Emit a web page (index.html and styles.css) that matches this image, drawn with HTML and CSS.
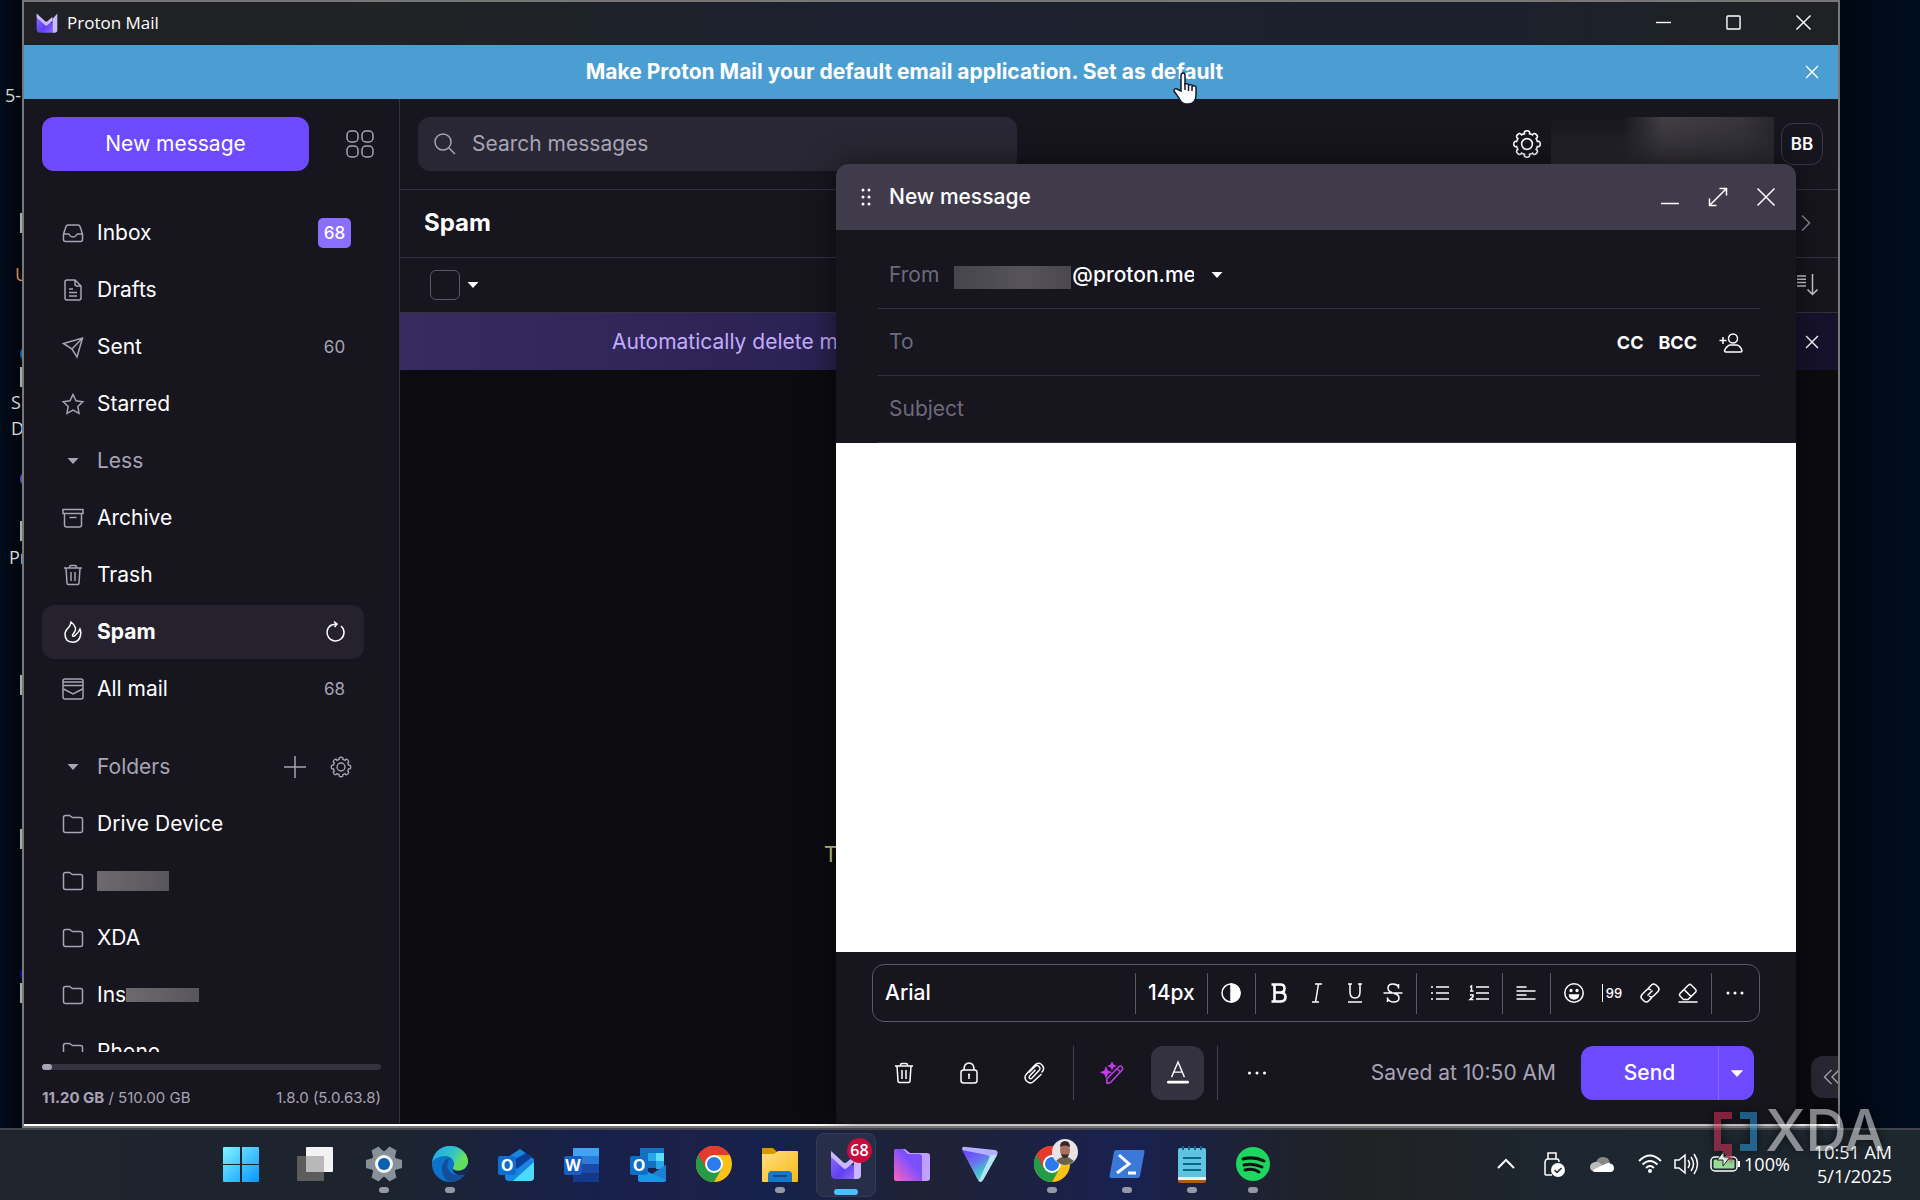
FILE: index.html
```html
<!DOCTYPE html>
<html lang="en">
<head>
<meta charset="utf-8">
<title>Proton Mail</title>
<link rel="stylesheet" href="styles.css">
</head>
<body>
<svg class="defs" aria-hidden="true">
  <symbol id="gear" viewBox="-12 -12 24 24"><path d="M8.3-2Q10.6-2.6 10.6 0T8.3 2Q7.8 3.4 7.3 4.4Q9.4 5.6 7.5 7.5T4.4 7.3Q3.2 7.9 2 8.3Q2.6 10.6 0 10.6T-2 8.3Q-3.4 7.8-4.4 7.3Q-5.6 9.4-7.5 7.5T-7.3 4.4Q-7.9 3.2-8.3 2Q-10.6 2.6-10.6 0T-8.3-2Q-7.8-3.4-7.3-4.4Q-9.4-5.6-7.5-7.5T-4.4-7.3Q-3.2-7.9-2-8.3Q-2.6-10.6 0-10.6T2-8.3Q3.4-7.8 4.4-7.3Q5.6-9.4 7.5-7.5T7.3-4.4Q7.9-3.2 8.3-2Z"/><circle r="4.3"/></symbol>
  <symbol id="trash" viewBox="0 0 22 22"><path d="M2 4h18M4 4l1 15q0 1.5 1.500 1.500h9q1.500 0 1.500-1.500l1-15M7.500 4V3q0-1.500 1.500-1.500h4q1.500 0 1.500 1.500v1M9 8v9M13 8v9"/></symbol>
  <symbol id="folder" viewBox="0 0 22 22"><path d="M1.500 4.500q0-2 2-2h4l3 2h8q2 0 2 2v11q0 2-2 2h-15q-2 0-2-2z"/></symbol>
  <symbol id="caret" viewBox="0 0 12 8"><path d="M.5 1h11L6 7z" fill="currentColor" stroke="none"/></symbol>
  <symbol id="cross" viewBox="0 0 20 20"><path d="M1.500 1.500l17 17M18.500 1.500l-17 17"/></symbol>
  <linearGradient id="pm" x1="0" y1="0" x2="1" y2="1"><stop offset="0" stop-color="#8f70ff"/><stop offset=".6" stop-color="#6040f0"/><stop offset="1" stop-color="#8c68ff"/></linearGradient>
  <linearGradient id="pf" x1="1" y1="0" x2="0" y2="1"><stop offset=".4" stop-color="#7a50ff"/><stop offset="1" stop-color="#ff62c0"/></linearGradient>
  <linearGradient id="pv" x1="0" y1="0" x2=".6" y2="1"><stop offset="0" stop-color="#6a3cff"/><stop offset=".5" stop-color="#6a70f0"/><stop offset="1" stop-color="#30e8c0"/></linearGradient>
  <linearGradient id="win" x1="0" y1="0" x2="1" y2="1"><stop offset="0" stop-color="#80f4ff"/><stop offset="1" stop-color="#0c94ff"/></linearGradient>
  <linearGradient id="edge" x1="0" y1="0" x2="1" y2=".4"><stop offset="0" stop-color="#20a8e8"/><stop offset=".6" stop-color="#32c4c8"/><stop offset="1" stop-color="#72e848"/></linearGradient>
  <linearGradient id="fold" x1="0" y1="0" x2="1" y2="1"><stop offset="0" stop-color="#ffe080"/><stop offset="1" stop-color="#f8b818"/></linearGradient>
  <symbol id="proton" viewBox="0 0 32 32"><path d="M1 3l14 13h9v14H6q-5 0-5-5z" fill="url(#pm)"/><path d="M24 10l7-8v24q0 4-4 4h-3z" fill="#c9b8ff"/><path d="M1 2l12 11q2 2 4 0l7-6v6l-7 6q-2 2-4 0L1 8z" fill="#c9b8ff"/></symbol>
  <symbol id="chrome" viewBox="-18 -18 36 36"><circle r="18" fill="#fbc116"/><path d="M0 0L-15.600-9A18 18 0 0 1 15.600-9L0-9z" fill="#e33b2e"/><path d="M0 0L-15.600-9A18 18 0 0 0 0 18L8 4z" fill="#259a47"/><path d="M-15.600-9A18 18 0 0 1 15.600-9H0L-8 4z" fill="#e33b2e"/><circle r="9" fill="#fff"/><circle r="7" fill="#2c7bea"/></symbol>
</svg>

<main class="desktop">
  <span class="label label-time">5-</span>
  <span class="chip chip-1"></span><span class="label label-u">U</span>
  <span class="orb orb-blue"></span><span class="chip chip-2"></span>
  <span class="label label-s">S</span><span class="label label-d">D</span>
  <span class="orb orb-violet"></span><span class="chip chip-3"></span>
  <span class="label label-p">Pr</span><span class="chip chip-4"></span><span class="chip chip-5"></span>
  <span class="orb orb-deep"></span><span class="chip chip-6"></span>

  <section class="window">
    <header class="titlebar">
      <svg class="logo"><use href="#proton"/></svg>
      <h1>Proton Mail</h1>
      <div class="win-buttons">
        <button aria-label="Minimize"><svg viewBox="0 0 16 16"><path d="M0 8h16"/></svg></button>
        <button aria-label="Maximize"><svg viewBox="0 0 16 16"><rect x="1" y="1" width="14" height="14" rx="1"/></svg></button>
        <button aria-label="Close"><svg viewBox="0 0 16 16"><path d="M.5.5l15 15M15.500.5l-15 15"/></svg></button>
      </div>
    </header>
    <div class="notice">
      <p>Make Proton Mail your default email application. <a href="#default">Set as default</a></p>
      <button class="notice-close" aria-label="Dismiss"><svg class="i12"><use href="#cross"/></svg></button>
      <svg class="cursor" viewBox="0 0 22 34"><path d="M8 19V4Q8 1 10 1t2 3v8q3-1 4 1 3-1 4 1 3-1 3 2v7q0 8-7 9h-4q-4-1-6-6L1 19q0-3 3-2z" fill="#fff" stroke="#16182c" stroke-width="1.500"/><path d="M12 11v7M15.500 13v6M19 14v5" stroke="#16182c" stroke-width="1.500"/></svg>
    </div>

    <div class="app">
      <aside class="sidebar">
        <div class="side-top">
          <button class="primary compose">New message</button>
          <button class="apps" aria-label="Apps"><svg viewBox="0 0 28 28"><rect x="1" y="1" width="11" height="11" rx="4"/><rect x="16" y="1" width="11" height="11" rx="4"/><rect x="1" y="16" width="11" height="11" rx="4"/><rect x="16" y="16" width="11" height="11" rx="4"/></svg></button>
        </div>
        <nav class="nav">
          <a href="#inbox"><svg viewBox="0 0 22 22"><path d="M1.500 12L4 4.500Q4.500 3 6 3h10q1.500 0 2 1.500L20.500 12v5.500q0 2-2 2h-15q-2 0-2-2zM1.500 12H6q1 0 1.500 1 1 2 3.500 2t3.500-2q.5-1 1.500-1h4.500"/></svg>Inbox<b class="count badge">68</b></a>
          <a href="#drafts"><svg viewBox="0 0 22 22"><path d="M3 3q0-2 2-2h8l6 6v12q0 2-2 2H5q-2 0-2-2zM13 1v4q0 2 2 2h4M7 10h4M7 13.500h8M7 17h8"/></svg>Drafts</a>
          <a href="#sent"><svg viewBox="0 0 22 22"><path d="M1.500 7.500L20.500 2l-5.500 19-5-8zM20.500 2L10 13"/></svg>Sent<span class="count">60</span></a>
          <a href="#starred"><svg viewBox="0 0 22 22"><path d="M11 1.500l3 6.300 6.800.9-5 4.800 1.200 6.800-6-3.300-6 3.300 1.200-6.800-5-4.800 6.800-.9z"/></svg>Starred</a>
          <button class="toggle"><svg class="caret"><use href="#caret"/></svg>Less</button>
          <a href="#archive"><svg viewBox="0 0 22 22"><path d="M1 2.500h20v4H1zM2.500 6.500V18q0 2 2 2h13q2 0 2-2V6.500M7.500 10.500h7"/></svg>Archive</a>
          <a href="#trashed"><svg><use href="#trash"/></svg>Trash</a>
          <a href="#spam" class="current"><svg viewBox="0 0 22 22"><path d="M9 1q3 2 4.500 6 .5 2-1 4l-2 3q0 2 2 1l2-2q2-1.500 3.500-5 1.500 3 .5 6.500Q17 21 11 21.300 3 21 3 13q0-3 4-7 1.500-2 2-5z"/></svg>Spam<svg class="end" viewBox="0 0 22 22"><path d="M16 5a8.500 8.500 0 1 1-9.500-1L11 3M9 .5L12 3 9.500 6"/></svg></a>
          <a href="#all"><svg viewBox="0 0 22 22"><rect x="1" y="1" width="20" height="20" rx="2"/><path d="M1 4h20M1 7.500h20M1.500 11l9.500 5 9.500-5"/></svg>All mail<span class="count">68</span></a>
          <div class="folders-head">
            <button class="toggle"><svg class="caret"><use href="#caret"/></svg>Folders</button>
            <button class="mini" aria-label="Create folder"><svg viewBox="0 0 22 22"><path d="M11 0v22M0 11h22"/></svg></button>
            <button class="mini" aria-label="Manage folders"><svg><use href="#gear"/></svg></button>
          </div>
          <a href="#f1"><svg><use href="#folder"/></svg>Drive Device</a>
          <a href="#f2"><svg><use href="#folder"/></svg><span class="mask mask-a"></span></a>
          <a href="#f3"><svg><use href="#folder"/></svg>XDA</a>
          <a href="#f4"><svg><use href="#folder"/></svg><span class="partial">Ins<span class="mask mask-b"></span></span></a>
          <a href="#f5"><svg><use href="#folder"/></svg>Phone</a>
        </nav>
        <footer class="storage">
          <div class="meter"><span style="width:3%"></span></div>
          <p><span><b>11.20 GB</b> / 510.00 GB</span><span>1.8.0 (5.0.63.8)</span></p>
        </footer>
      </aside>

      <section class="content">
        <div class="topbar">
          <label class="search"><svg viewBox="0 0 22 22"><circle cx="9" cy="9" r="8"/><path d="M15 15l6 6"/></svg><input type="search" placeholder="Search messages" aria-label="Search messages"></label>
          <button class="settings" aria-label="Settings"><svg><use href="#gear"/></svg></button>
          <span class="mask-user"></span>
          <button class="avatar">BB</button>
        </div>
        <div class="heading"><h2>Spam</h2><button aria-label="Next"><svg viewBox="0 0 10 16"><path d="M1 .5L8.500 8 1 15.500"/></svg></button></div>
        <div class="tools"><input type="checkbox" aria-label="Select all"><svg class="caret"><use href="#caret"/></svg><button aria-label="Sort"><svg viewBox="0 0 22 22"><path d="M1 2h9M1 5.300h9M1 8.600h9M1 12h9M16.500 0v20M11.500 15.500l5 5 5-5"/></svg></button></div>
        <div class="auto"><p>Automatically delete messages</p><button aria-label="Dismiss"><svg class="i12"><use href="#cross"/></svg></button></div>
        <div class="empty"><p>There are no messages</p><button class="collapse" aria-label="Show side panel"><svg viewBox="0 0 18 18"><path d="M8.500 1l-8 8 8 8M17 1L9 9l8 8"/></svg></button></div>
      </section>

      <form class="composer">
        <header>
          <svg class="grip" viewBox="0 0 12 18"><g fill="#fff" stroke="none"><circle cx="3" cy="2" r="1.500"/><circle cx="9" cy="2" r="1.500"/><circle cx="3" cy="9" r="1.500"/><circle cx="9" cy="9" r="1.500"/><circle cx="3" cy="16" r="1.500"/><circle cx="9" cy="16" r="1.500"/></g></svg>
          <h2>New message</h2>
          <button type="button" aria-label="Minimize"><svg viewBox="0 0 20 20"><path d="M1 16.500h18"/></svg></button>
          <button type="button" aria-label="Expand"><svg viewBox="0 0 20 20"><path d="M1.500 18.500l17-17M11.500 1.500h7v7M1.500 11.500v7h7"/></svg></button>
          <button type="button" aria-label="Close"><svg><use href="#cross"/></svg></button>
        </header>
        <div class="fields">
          <div class="field"><label for="from">From</label><span class="mask mask-c"></span><select id="from"><option>@proton.me</option></select><svg class="caret"><use href="#caret"/></svg></div>
          <div class="field"><input placeholder="To" aria-label="To"><button type="button">CC</button><button type="button">BCC</button><button type="button" aria-label="Add contacts"><svg viewBox="0 0 24 20"><circle cx="14" cy="5.500" r="4.500"/><path d="M9 13q1-1 2-1h6q4 0 6 5.500 0 1.500-1.500 1.500H7q-1.500 0-1.500-1.500Q6.500 14.500 9 13zM4 4v7M.5 7.500h7"/></svg></button></div>
          <div class="field"><input placeholder="Subject" aria-label="Subject"></div>
        </div>
        <textarea aria-label="Message body"></textarea>
        <div class="format">
          <select class="font" aria-label="Font"><option>Arial</option></select>
          <select class="size" aria-label="Font size"><option>14px</option></select>
          <div class="g1"><button type="button" aria-label="Colour"><svg viewBox="0 0 20 20"><circle cx="10" cy="10" r="9"/><path d="M10 1a9 9 0 0 1 0 18z" fill="#fff"/></svg></button></div>
          <div class="g2">
            <button type="button" aria-label="Bold"><svg viewBox="0 0 20 20"><path d="M2.500 1.500h9q4 0 4 4t-4 4h-6M11 9.500q5.500 0 5.500 4.500t-5.500 4.500H2.500M5.500 1.500v17" stroke-width="2.600"/></svg></button>
            <button type="button" aria-label="Italic"><svg viewBox="0 0 20 20"><path d="M8 1h7M5 19h7M11.500 1l-3 18"/></svg></button>
            <button type="button" aria-label="Underline"><svg viewBox="0 0 20 20"><path d="M3 1h4M13 1h4M5 1v8q0 6 5 6t5-6V1M3 19h14"/></svg></button>
            <button type="button" aria-label="Strikethrough"><svg viewBox="0 0 20 20"><path d="M15.500 5.500V1M15.500 4Q14 1 10 1 5 1 5 5q0 3.500 4 4.500M11 10.500q5 1 5 4.500 0 4-5.500 4-4 0-6-3.500M4.500 19v-4.500M.5 10h19"/></svg></button>
          </div>
          <div class="g3">
            <button type="button" aria-label="Bullets"><svg viewBox="0 0 20 20"><path d="M6 4h13M6 10h13M6 16h13M1 4h2M1 10h2M1 16h2"/></svg></button>
            <button type="button" aria-label="Numbering"><svg viewBox="0 0 20 20"><path d="M7 4h13M7 10h13M7 16h13M1 4l1.500-1v5M1 8h3.500M1 12h3v1.500l-3 3h3.500"/></svg></button>
          </div>
          <div class="g4"><button type="button" aria-label="Align"><svg viewBox="0 0 20 20"><path d="M.5 4h10M.5 8h19M.5 12h10M.5 16h19"/></svg></button></div>
          <div class="g5">
            <button type="button" aria-label="Emoji"><svg viewBox="0 0 20 20"><circle cx="10" cy="10" r="9.200"/><circle cx="7" cy="7.500" r=".9" fill="#fff"/><circle cx="13" cy="7.500" r=".9" fill="#fff"/><path d="M5.500 12h9q-.5 4-4.500 4t-4.500-4z" fill="#fff"/></svg></button>
            <button type="button" aria-label="Quote" class="quote">99</button>
            <button type="button" aria-label="Link"><svg viewBox="0 0 20 20"><path d="M8 5.500l3.500-3.500q2-2 4.500 0l2 2q2 2 0 4.500l-4.500 4.500q-2 2-4.500 0M12 14.500L8.500 18q-2 2-4.500 0l-2-2q-2-2 0-4.500L6.500 7q2-2 4.500 0M7.500 12.500l5-5"/></svg></button>
            <button type="button" aria-label="Clear formatting"><svg viewBox="0 0 20 20"><path d="M.5 19h19M8 16.500h-2.500L2 13q-1.200-1.200 0-2.500l8.500-8.500q1.500-1.200 2.700 0l4.500 4.500q1 1.200 0 2.500L10 16.500zM6 6.500l7 7"/></svg></button>
          </div>
          <div class="g6"><button type="button" aria-label="More"><svg viewBox="0 0 20 20"><g fill="#fff" stroke="none"><circle cx="3" cy="10" r="1.500"/><circle cx="10" cy="10" r="1.500"/><circle cx="17" cy="10" r="1.500"/></g></svg></button></div>
        </div>
        <div class="actions">
          <button type="button" aria-label="Delete"><svg><use href="#trash"/></svg></button>
          <button type="button" aria-label="Encrypt"><svg viewBox="0 0 22 22"><rect x="3" y="8" width="16" height="13" rx="2.500"/><path d="M6 8Q6 1 11 1t5 7M11 13v4M10 12.500h2"/></svg></button>
          <button type="button" aria-label="Attach"><svg viewBox="0 0 22 22"><path d="M6 10.500l6-6q2-2 4 0 2 1.800 0 4l-7 7.500q-1.500 1.500-2.500.3-1-1 .3-2.500l5.700-6M18.500 12l-8 7.500q-3.500 3-7-.5-3-3.500 0-7l8-8.500q4-4 7.500-.5 3.500 4-.5 7.500"/></svg></button>
          <i></i>
          <button type="button" class="magic" aria-label="Writing assistant"><svg viewBox="0 0 22 22"><path d="M5 21.300l-.3-4.300L17 4.500q1.500-1 3 .3 1.300 1.500.3 3L8.500 20.500zM15 7l3.500 3"/><path d="M4 6l1.200 3 3 1.200-3 1.200L4 14.500l-1.200-3-3-1.200 3-1.200zM10 1l.9 2 2 .9-2 .9-.9 2-.9-2-2-.9 2-.9z" fill="currentColor"/></svg></button>
          <button type="button" class="on" aria-label="Formatting"><svg viewBox="0 0 24 24"><path d="M5 16.500L12 0l7 16.500M7.500 11h9"/><path d="M1.500 22h21" stroke-width="3" stroke-linecap="round"/></svg></button>
          <i></i>
          <button type="button" class="more" aria-label="More"><svg viewBox="0 0 20 20"><g fill="#fff" stroke="none"><circle cx="2.500" cy="10" r="1.500"/><circle cx="10" cy="10" r="1.500"/><circle cx="17.500" cy="10" r="1.500"/></g></svg></button>
          <span class="saved">Saved at 10:50 AM</span>
          <button class="primary send">Send</button><button type="button" class="primary send-menu" aria-label="Send options"><svg class="caret"><use href="#caret"/></svg></button>
        </div>
      </form>
    </div>
  </section>
</main>

<footer class="taskbar">
  <div class="tasks">
    <button aria-label="Start"><svg viewBox="0 0 36 36"><path d="M0 2q0-1 1-1h16v17H0zM19 1h16q1 0 1 1v16H19zM0 19h17v17H1q-1 0-1-1zM19 19h17v16q0 1-1 1H19z" fill="url(#win)"/></svg></button>
    <button aria-label="Task view"><svg viewBox="0 0 36 36"><rect x="9" y="1" width="27" height="25" rx="1" fill="#f2f2f2"/><rect y="10" width="27" height="25" rx="1" fill="#5c5c5c"/><path d="M9 10h18v16H9z" fill="#b8b8b8"/></svg></button>
    <button class="run" aria-label="Settings"><svg viewBox="-18 -18 36 36"><g fill="#86919a"><circle r="13"/><path id="tooth" d="M-6-11l2-7h8l2 7zM-6 11l2 7h8l2-7z" transform="rotate(30)"/><use href="#tooth" transform="rotate(60)"/><use href="#tooth" transform="rotate(120)"/></g><circle r="9" fill="#f4f4f4"/><circle r="6" fill="#0860b0"/></svg></button>
    <button class="run" aria-label="Edge"><svg viewBox="0 0 36 36"><circle cx="18" cy="18" r="18" fill="#0c72cc"/><path d="M0 17C1 7 8 0 18 0c11 0 18 8 18 15 0 8-8 11-13 9-3-1-2-2-1-4 1-4-2-10-9-10C7 10 1 13 0 17z" fill="url(#edge)"/><path d="M10 23c0-7 4-11 9-11-6 4-5 16 6 17 4 0 7-1 9-2-3 5-8 9-15 9-5-1-9-6-9-13z" fill="#124f98"/><path d="M36 15c0 8-8 11-13 9-3-1-2-2-1-4-3 3 0 9 6 9 3 0 5-1 7-2l4-8z" fill="#182452"/><path d="M36 15c0 8-8 11-13 9-3-1-2-2-1-4 2-4 6-8 14-5z" fill="#60dc60"/></svg></button>
    <button aria-label="Outlook"><svg viewBox="0 0 36 36"><path d="M7 13L22 3l14 10v18q0 4-4 4H11q-4 0-4-4z" fill="#1a86e0"/><path d="M12 16L28 7l6 4-15 12z" fill="#0a3f98"/><path d="M15 35l21-19v15q0 4-4 4z" fill="#50d8ff"/><rect y="10" width="18" height="19" rx="2" fill="#0f6fd0"/><text x="9" y="25" class="tile">O</text></svg></button>
    <button aria-label="Word"><svg viewBox="0 0 36 36"><path d="M9 2h26v34H9z" fill="#1b4ba8"/><path d="M9 2h26v8H9z" fill="#40a4f0"/><path d="M9 10h26v8H9z" fill="#2b7cd8"/><path d="M9 27h26v9H9z" fill="#123a88"/><rect y="10" width="18" height="19" rx="2" fill="#1a5cc0"/><text x="9" y="25" class="tile">W</text></svg></button>
    <button aria-label="Outlook classic"><svg viewBox="0 0 36 36"><path d="M10 2h24v20H10z" fill="#1470c0"/><path d="M18 7h8v8h-8zM26 15h8v8h-8z" fill="#28a8ea"/><path d="M26 7h8v8h-8z" fill="#60dcff"/><path d="M8 20l14 8 14-9v15q0 2-2 2H10q-2 0-2-2z" fill="#1e96e6"/><path d="M22 28l14-9v15z" fill="#1a80d0"/><rect y="10" width="18" height="19" rx="2" fill="#0f6fc8"/><text x="9" y="25" class="tile">O</text></svg></button>
    <button aria-label="Chrome"><svg><use href="#chrome"/></svg></button>
    <button class="run" aria-label="File Explorer"><svg viewBox="0 0 36 36"><path d="M0 3q0-1 1-1h10l4 4h10v6H0z" fill="#d89800"/><path d="M0 8h12l4-3h19q1 0 1 1v29q0 1-1 1H1q-1 0-1-1z" fill="url(#fold)"/><path d="M6 36V29q0-4 4-4h16q4 0 4 4v7z" fill="#1478c8"/><path d="M11 30h14" stroke="#0c4c88" stroke-width="2"/></svg></button>
    <button class="active" aria-label="Proton Mail"><svg><use href="#proton"/></svg><b>68</b></button>
    <button aria-label="Proton Drive"><svg viewBox="0 0 36 36"><path d="M0 6q0-3 3-3h8l5 4h17q3 0 3 3v22q0 3-3 3H3q-3 0-3-3z" fill="#c0a0ff"/><path d="M0 6q0-3 3-3h6l5 5h11q3 0 3 3v24H3q-3 0-3-3z" fill="url(#pf)"/></svg></button>
    <button aria-label="Proton VPN"><svg viewBox="0 0 36 36"><path d="M0 3Q0 0 4 1l29 3q4 1 2 5L21 34q-3 4-5 0z" fill="#b4b0ff"/><path d="M0 4l25 5q3 1 2 3L17 34z" fill="url(#pv)"/><path d="M35 9L21 34q-2 3-4 1L29 9z" fill="#b0e8f0"/></svg></button>
    <button class="run" aria-label="Chrome profile"><svg><use href="#chrome"/></svg><svg class="profile" viewBox="0 0 26 26"><circle cx="13" cy="13" r="13" fill="#e8e4e6"/><path d="M4 22q3-3 6-4h6l6 4q-9 8-18 0z" fill="#6c6448"/><ellipse cx="13" cy="11" rx="5" ry="7" fill="#a87060"/><path d="M8 8q0-6 5-6t5 6q-5-3-10 0zM9 15q4 1 8 0-1 4-4 4t-4-4z" fill="#382828"/></svg></button>
    <button class="run" aria-label="PowerShell"><svg viewBox="0 0 36 36"><path d="M7 4h27q2 0 1.500 2L31 30q-.5 2-2 2H2q-2 0-1.500-2L5 6q.5-2 2-2z" fill="#3c78d8"/><path d="M10 9l10 9L8 27M19 27h8" fill="none" stroke="#fff" stroke-width="3"/></svg></button>
    <button class="run" aria-label="Notepad"><svg viewBox="0 0 36 36"><path d="M4 32h28v3q0 2-2 2H6q-2 0-2-2z" fill="#b05818"/><path d="M4 30h28v4H4z" fill="#eee"/><path d="M4 4q0-2 2-2h24q2 0 2 2v27H4z" fill="#60c4e0"/><path d="M9 12h18M9 18h18M9 24h18M9 0v4M15 0v4M21 0v4M27 0v4" stroke="#0c6888" stroke-width="2"/></svg></button>
    <button class="run" aria-label="Spotify"><svg viewBox="0 0 36 36"><circle cx="18" cy="18" r="17" fill="#1ed760"/><path d="M8 13q11-3 21 2M9 19q9-2 18 2M10 24q8-2 14 2" fill="none" stroke="#111" stroke-width="3" stroke-linecap="round"/></svg></button>
  </div>
  <div class="tray">
    <svg viewBox="0 0 24 24"><path d="M4 16l8-8 8 8" stroke-width="2"/></svg>
    <svg viewBox="0 0 24 24"><path d="M6 7V1h8v6M10 23H4q-1 0-1-1V11q0-4 3-4h9q2 0 2 3"/><circle cx="16" cy="18" r="7" fill="#fff" stroke="none"/><path d="M12.500 18l2.500 2.500 4.500-4.500" stroke="#1e252c"/></svg>
    <svg viewBox="0 0 24 24"><g stroke="none"><path d="M6 13q0-8 7-8 6 0 7 6l-7 5z" fill="#888"/><path d="M5 20q-5-1-5-5t5-5q3-1 6 2l10 8z" fill="#bbb"/><path d="M3 18l12-6q2-1 4-1 5 1 5 5t-4 4H6q-3 0-3-2z" fill="#fff"/></g></svg>
    <svg viewBox="0 0 24 24"><path d="M1 9q11-11 22 0M4.500 12.500q7.500-7 15 0M8 16q4-4 8 0" stroke-width="1.800"/><circle cx="12" cy="19" r="2" fill="#fff" stroke="none"/></svg>
    <svg viewBox="0 0 24 24"><path d="M1 8h4l6-5v18l-6-5H1zM14 8q3 4 0 8M17 5q5 7 0 14M20 2q7 10 0 20"/></svg>
    <svg class="battery" viewBox="0 0 30 16"><rect x="1" y="1" width="26" height="14" rx="4"/><rect x="3.500" y="3.500" width="21" height="9" rx="1.500" fill="#98dc98" stroke="none"/><path d="M29 5v6" stroke-width="2"/><path d="M14-5v6h6l-7 9V4H7z" fill="#fff" stroke="#1e252c" stroke-width="1"/></svg>
    <span>100%</span>
    <p class="clock"><time>10:51 AM</time><time>5/1/2025</time></p>
  </div>
</footer>
<div class="watermark"><svg viewBox="0 0 44 54"><path d="M0 0h18v7H7v25h11v20L9 39H0z" fill="#d83058"/><path d="M26 0h17v39H26v-7h10V7H26z" fill="#2898d8"/></svg><span>XDA</span></div>
</body>
</html>
```
FILE: styles.css
```css
* { box-sizing: border-box; }
html, body { height: 100%; }
body {
  margin: 0;
  display: flex;
  flex-direction: column;
  position: relative;
  overflow: hidden;
  background: #000814;
  color: #fff;
  font: 21px/28px Inter, sans-serif;
}
h1, h2, p { margin: 0; font: inherit; }
button, input, select, textarea {
  font: inherit; color: inherit; background: none; border: 0; padding: 0; margin: 0; outline: 0;
}
button { display: flex; align-items: center; justify-content: center; flex: none; }
select { appearance: none; }
a { color: inherit; text-decoration: none; }
svg { display: block; flex: none; fill: none; stroke: currentColor; stroke-width: 1.5; overflow: visible; }
.defs { position: absolute; width: 0; height: 0; }
.caret { width: 12px; height: 8px; }
.i12 { width: 14px; height: 14px; stroke-width: 2; }

/* desktop */
.desktop {
  flex: 1; min-height: 0; position: relative; display: flex;
  padding: 0 80px 0 22px;
  background: linear-gradient(90deg, #010d1b, #01060f 1%, #01060f 95%, #000d20);
}
.label { position: absolute; color: #d8d8d8; font: 18px/24px "Open Sans", sans-serif; }
.label-time { left: 5px; top: 83px; }
.label-u { left: 15px; top: 262px; color: #d88a50; }
.label-s { left: 11px; top: 390px; }
.label-d { left: 11px; top: 416px; }
.label-p { left: 9px; top: 545px; }
.chip { position: absolute; left: 20px; width: 4px; height: 20px; background: #aaa; }
.chip-1 { top: 213px; }
.chip-2 { top: 367px; }
.chip-3 { top: 521px; }
.chip-4 { top: 675px; }
.chip-5 { top: 829px; }
.chip-6 { top: 983px; }
.orb { position: absolute; left: 20px; width: 16px; height: 16px; border-radius: 50%; }
.orb-blue { top: 346px; background: #0868b0; }
.orb-violet { top: 471px; background: #6848c0; }
.orb-deep { top: 966px; background: #1008a0; }

.window {
  flex: 1; min-width: 0; position: relative; display: flex; flex-direction: column; overflow: hidden;
  border: 2px solid #777;
  background: #17151e;
}
.titlebar {
  flex: none; display: flex; align-items: center; gap: 9px; height: 43px; padding: 0 0 2px 12px;
  background: linear-gradient(90deg, #202124, #202224 20%, #1b212e 45%, #1b212c 80%, #202124);
}
.titlebar h1 { font: 17px/24px "Open Sans", sans-serif; }
.logo { width: 22px; height: 22px; stroke: none; }
.win-buttons { margin-left: auto; display: flex; }
.win-buttons button { width: 70px; height: 41px; }
.win-buttons svg { width: 15px; height: 15px; }
.notice {
  flex: none; position: relative; display: flex; align-items: center; gap: 20px; height: 54px; padding: 0 19px 0 0;
  background: #4b9ed1; font-weight: 700;
}
.notice p { flex: 1; text-align: center; }
.notice-close { width: 14px; }
.cursor { position: absolute; left: 1149px; top: 27px; width: 22px; height: 34px; z-index: 5; stroke: none; }

.app { flex: 1; min-height: 0; position: relative; display: flex; border-bottom: 2px solid #fff; }

/* sidebar */
.sidebar { flex: none; width: 376px; display: flex; flex-direction: column; border-right: 1px solid #34323f; }
.side-top { flex: none; display: flex; gap: 37px; padding: 18px 18px 0; }
.primary { background: #6d4aff; border-radius: 12px; height: 54px; }
.compose { width: 267px; }
.apps { color: #a7a4b5; }
.apps svg { width: 28px; height: 28px; }
.nav { flex: 1; min-height: 0; overflow: hidden; display: flex; flex-direction: column; gap: 3px; margin-top: 35px; padding: 0 35px 0 18px; }
.nav a, .nav .toggle { flex: none; display: flex; align-items: center; justify-content: flex-start; gap: 13px; height: 54px; padding: 0 13px 0 20px; border-radius: 12px; }
.nav svg { width: 22px; height: 22px; color: #a7a4b5; }
.nav .toggle { color: #a7a4b5; gap: 18px; padding-left: 25px; }
.nav .caret { width: 12px; height: 8px; }
.nav .current { background: #25222d; font-weight: 700; }
.nav .current svg { color: #fff; }
.nav .end { margin-left: auto; margin-right: 4px; }
.count { margin-left: auto; width: 33px; line-height: 30px; text-align: center; font-size: 17px; color: #a7a4b5; }
.badge { background: #8a6eff; color: #fff; border-radius: 5px; font-weight: 500; }
.folders-head { flex: none; display: flex; align-items: center; gap: 24px; margin-top: 21px; padding-right: 12px; }
.folders-head .toggle { flex: 1; }
.mask { display: block; background: linear-gradient(90deg, #6c6a6e, #58565c); }
.mask-a { width: 72px; height: 20px; }
.mask-b { width: 73px; height: 14px; }
.mask-c { width: 117px; height: 23px; background: linear-gradient(90deg, #47454c, #56545a 60%, #4a484e); }
.partial { display: flex; align-items: center; }
.storage { flex: none; padding: 12px 18px; font-size: 15px; color: #a7a4b5; }
.storage p { display: flex; justify-content: space-between; margin-top: 14px; }
.meter { height: 6px; border-radius: 3px; background: #34323f; }
.meter span { display: block; height: 6px; border-radius: 3px; background: #a7a4b5; }

/* mailbox */
.content { flex: 1; min-width: 0; display: flex; flex-direction: column; }
.content > div { flex: none; display: flex; align-items: center; }
.content .topbar { height: 91px; padding: 18px 15px 18px 18px; align-items: flex-start; border-bottom: 1px solid #34323f; }
.search { flex: none; width: 599px; height: 54px; display: flex; align-items: center; gap: 16px; padding: 0 16px; margin-right: auto; border-radius: 12px; background: #292733; color: #a7a4b5; }
.search svg { width: 22px; height: 22px; }
.search input { flex: 1; }
::placeholder { color: inherit; opacity: 1; }
.settings { height: 54px; margin-right: 9px; }
.settings svg { width: 30px; height: 30px; stroke-width: 1.3; }
.mask-user { width: 223px; height: 54px; background: linear-gradient(180deg, transparent, #2c2a31), linear-gradient(90deg, #17151e 32%, #424045 50%, #38363c 85%, #28262c); }
.avatar { width: 42px; height: 42px; margin: 6px 0 0 7px; border: 1px solid #3c3848; border-radius: 12px; font-size: 17px; font-weight: 600; }
.content .heading { height: 68px; padding: 0 27px 2px 24px; justify-content: space-between; border-bottom: 1px solid #34323f; font-size: 24px; font-weight: 700; }
.heading svg { width: 10px; height: 16px; color: #8c8a94; }
.content .tools { height: 55px; padding: 0 20px 0 30px; gap: 7px; border-bottom: 1px solid #34323f; }
.tools input { appearance: none; width: 30px; height: 30px; border: 1px solid #5b576b; border-radius: 6px; }
.tools button { margin-left: auto; color: #ccc; }
.tools button svg { width: 22px; height: 22px; }
.content .auto { height: 57px; padding: 0 19px 0 212px; justify-content: space-between; background: linear-gradient(90deg, #372b5f, #2a2252 30%, #17122c); color: #c3acff; }
.auto button { color: #fff; }
.content .empty { flex: 1; position: relative; overflow: hidden; padding: 0 0 0 424px; background: #0c0b10; color: #d0c890; }
.empty p { margin-top: 216px; }
.collapse { position: absolute; right: -24px; bottom: 26px; width: 51px; height: 42px; justify-content: flex-start; padding-left: 12px; border-radius: 12px; background: #292733; color: #a7a4b5; }
.collapse svg { width: 18px; height: 16px; }

/* composer */
.composer {
  position: absolute; top: 65px; right: 42px; bottom: 0; width: 960px;
  display: flex; flex-direction: column; overflow: hidden;
  border-radius: 12px 12px 0 0; background: #17151e;
}
.app::after { content: ""; position: absolute; top: 65px; right: 42px; bottom: 0; width: 960px; border-radius: 12px; box-shadow: 0 0 32px rgba(0, 0, 0, .5); pointer-events: none; }
.composer header { flex: none; display: flex; align-items: center; gap: 28px; height: 66px; padding: 0 20px 0 24px; background: #403b4b; }
.composer h2 { flex: 1; font-weight: 500; }
.grip { width: 12px; height: 18px; margin-right: -11px; }
.composer header button svg { width: 20px; height: 20px; }
.fields { flex: none; padding: 12px 36px 0 42px; }
.field { display: flex; align-items: center; height: 67px; padding: 0 17px 0 11px; border-bottom: 1px solid #34323f; color: #6d697d; }
.field select { width: 122px; color: #fff; font-weight: 500; }
.field .mask { margin: 4px 1px 0 15px; }
.field .caret { margin-left: 17px; color: #fff; }
.field input { flex: 1; min-width: 0; }
.field button { margin: 2px 0 0 15px; color: #fff; font-size: 18px; font-weight: 700; }
.field button svg { width: 24px; height: 20px; margin-left: 7px; }
.composer textarea { flex: 1; min-height: 0; resize: none; background: #fff; color: #000; border-radius: 0; }
.format { flex: none; display: flex; align-items: center; height: 58px; margin: 12px 36px 24px; border: 1px solid #5b576b; border-radius: 12px; }
.format > * { height: 41px; border-left: 1px solid #5b576b; }
.format > div { display: flex; justify-content: space-between; align-items: center; padding: 0 13px; }
.format svg { width: 20px; height: 20px; }
.format select { font-weight: 500; }
.format .font { border: 0; width: 262px; padding-left: 12px; }
.format .size { width: 72px; padding-left: 12px; }
.g1 { width: 48px; }
.g2 { width: 161px; }
.g3 { width: 86px; }
.g4 { width: 48px; }
.g5 { width: 161px; }
.g6 { flex: 1; }
.quote { height: 18px; padding-left: 3px; border-left: 1px solid #fff; font-size: 13px; font-weight: 500; }
.actions { flex: none; display: flex; align-items: center; height: 54px; margin: 0 42px 24px 36px; }
.actions button { width: 53px; height: 54px; margin-right: 12px; }
.actions button:first-child { margin-left: 5px; }
.actions svg { width: 22px; height: 22px; }
.actions i { width: 1px; height: 54px; margin: 0 12px 0 1px; background: #454152; }
.actions .magic { color: #c43cf0; }
.actions .on { border-radius: 12px; background: #34323f; }
.actions .more svg { width: 20px; height: 20px; }
.actions .caret { width: 14px; height: 9px; }
.saved { margin-left: auto; margin-right: 25px; color: #a7a4b5; }
.actions .send { width: 137px; margin: 0; border-radius: 12px 0 0 12px; font-weight: 500; }
.actions .send-menu { width: 36px; margin: 0; border-left: 1px solid #8468ff; border-radius: 0 12px 12px 0; }

/* taskbar */
.taskbar {
  flex: none; display: flex; justify-content: space-between; height: 72px; padding: 0 28px 2px 204px;
  border-top: 2px solid #42464c;
  background: linear-gradient(90deg, #1f252d, #1d242e 20%, #17204c 31%, #1b2148 36%, #15224c 40%, #1f2234 48%, #192150 59%, #1d2234 65%, #212223 71%, #1d252e 80%, #1e262e);
}
.tasks { display: grid; grid-template-columns: 74px 74px 64px 68px 64px 68px 64px 68px 64px 68px 64px 72px 72px 78px 52px 70px; }
.tasks button { position: relative; }
.tasks svg { width: 36px; height: 36px; stroke: none; }
.tile { fill: #fff; font: 700 16px "Open Sans", sans-serif; text-anchor: middle; }
.run::after, .active::after { content: ""; position: absolute; left: 50%; bottom: 5px; width: 10px; height: 6px; margin-left: -5px; border-radius: 3px; background: #9498a4; }
.tasks .active { width: 60px; height: 64px; margin: 3px auto 0; border: 1px solid #343b58; border-radius: 8px; background: #272e48; }
.tasks .active svg { width: 32px; height: 32px; }
.active::after { width: 24px; bottom: 1px; margin-left: -12px; background: #4cc0ff; }
.active b { position: absolute; right: 3px; top: 4px; width: 25px; border-radius: 13px; background: #c80c3c; text-align: center; font: 600 16px/25px "Open Sans", sans-serif; }
.tasks .profile { position: absolute; right: 10px; top: 9px; width: 26px; height: 26px; }
.tray { display: flex; align-items: center; gap: 24px; font: 18px/24px "Open Sans", sans-serif; }
.tray svg { width: 24px; height: 24px; }
.tray svg:nth-child(5) { margin: 0 -12px; }
.tray .battery { width: 30px; height: 16px; }
.tray span { margin-left: -20px; }
.clock { text-align: right; }
.clock time { display: block; }

.watermark { position: absolute; right: 35px; bottom: 34px; display: flex; gap: 8px; opacity: .55; filter: drop-shadow(0 0 4px #000); pointer-events: none; }
.watermark svg { width: 44px; height: 54px; stroke: none; }
.watermark span { color: #e8e8e8; font: 500 57px/38px Inter, sans-serif; }
```
